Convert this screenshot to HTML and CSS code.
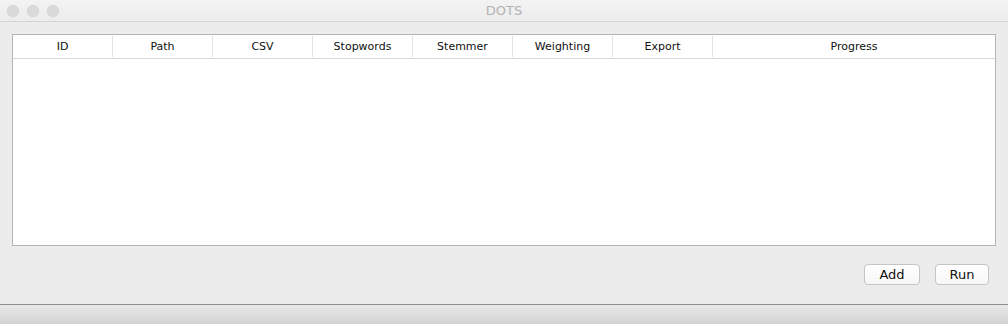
FILE: index.html
```html
<!DOCTYPE html>
<html lang="en">
<head>
  <meta charset="UTF-8" />
  <title>DOTS</title>
  <link rel="stylesheet" href="styles.css">
</head>
<body>
  <div class="window">
    <div class="titlebar">
      <div class="lights">
        <span class="light"></span>
        <span class="light"></span>
        <span class="light"></span>
      </div>
      <div class="title">DOTS</div>
    </div>

    <div class="content">
      <div class="table">
        <div class="table-header">
          <div class="col">ID</div>
          <div class="col">Path</div>
          <div class="col">CSV</div>
          <div class="col">Stopwords</div>
          <div class="col">Stemmer</div>
          <div class="col">Weighting</div>
          <div class="col">Export</div>
          <div class="col col-last">Progress</div>
        </div>
        <div class="table-body"></div>
      </div>

      <div class="actions">
        <button>Add</button>
        <button>Run</button>
      </div>
    </div>

    <div class="statusbar"></div>
  </div>
</body>
</html>
```

FILE: styles.css
```css
body {
  margin: 0;
  font-family: "DejaVu Sans", "Liberation Sans", sans-serif;
  background-color: #ececec;
}

.window {
  width: 1008px;
  height: 324px;
  display: flex;
  flex-direction: column;
  background-color: #ececec;
}

.titlebar {
  height: 21px;
  border-bottom: 1px solid #d3d3d3;
  background: linear-gradient(#f3f3f3, #ececec);
  position: relative;
}

.lights {
  display: flex;
  gap: 8px;
  padding: 5px 0 0 7px;
}

.light {
  width: 12px;
  height: 12px;
  border-radius: 50%;
  background-color: #dadada;
  box-shadow: inset 0 0 0 0.5px #cfcfcf;
}

.title {
  position: absolute;
  left: 0;
  right: 0;
  top: 3px;
  text-align: center;
  font-size: 13px;
  color: #b3b3b3;
}

.content {
  flex: 1;
  padding: 12px 12px 0 12px;
}

.table {
  height: 210px;
  border: 1px solid #b5b5b5;
  background-color: #fff;
  display: flex;
  flex-direction: column;
}

.table-header {
  display: flex;
  height: 23px;
  border-bottom: 1px solid #d8d8d8;
  align-items: center;
}

.col {
  width: 99px;
  height: 21px;
  border-right: 1px solid #e2e2e2;
  text-align: center;
  font-size: 11px;
  line-height: 21px;
  color: #111;
}

.col-last {
  flex: 1;
  border-right: none;
}

.table-body {
  flex: 1;
}

.actions {
  display: flex;
  justify-content: flex-end;
  gap: 15px;
  padding: 18px 7px 0 0;
}

button {
  width: 56px;
  height: 21px;
  padding: 0;
  font-family: "DejaVu Sans", "Liberation Sans", sans-serif;
  font-size: 13px;
  color: #111;
  background: linear-gradient(#ffffff, #f7f7f7);
  border: 1px solid #c4c4c4;
  border-radius: 4px;
}

button + button {
  width: 54px;
}

.statusbar {
  height: 19px;
  border-top: 1px solid #8c8c8c;
  background: linear-gradient(#e9e9e9, #d2d2d2);
}
```
